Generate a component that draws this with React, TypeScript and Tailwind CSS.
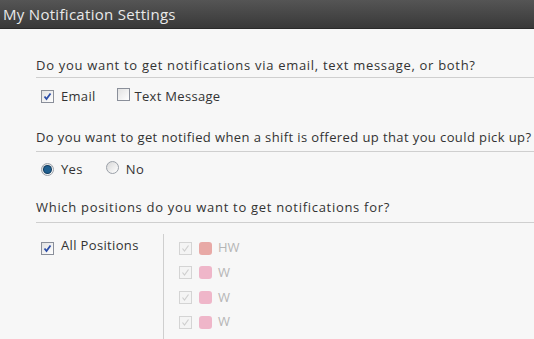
import React from "react";

function Check({ checked, disabled }: { checked: boolean; disabled?: boolean }) {
  return (
    <span
      className={
        "inline-flex h-[13px] w-[13px] shrink-0 items-center justify-center border " +
        (disabled ? "border-[#d4d4d4] bg-[#f4f4f4]" : "border-[#8a8f9a] bg-gradient-to-br from-[#e2e2e2] to-white")
      }
    >
      {checked && (
        <svg width="9" height="9" viewBox="0 0 9 9">
          <path
            d="M1.5 4.5 L3.5 7 L7.5 1.5"
            fill="none"
            stroke={disabled ? "#cfcfcf" : "#2d4ea8"}
            strokeWidth={disabled ? 1.2 : 1.8}
          />
        </svg>
      )}
    </span>
  );
}

function Radio({ checked }: { checked: boolean }) {
  return (
    <span className="inline-flex h-[13px] w-[13px] shrink-0 items-center justify-center rounded-full border border-[#9aa0a8] bg-gradient-to-br from-[#d8d8d8] to-white">
      {checked && <span className="h-[7px] w-[7px] rounded-full bg-[#1f5f8f] ring-1 ring-[#0d3a5e]" />}
    </span>
  );
}

export default function App() {
  const font = { fontFamily: '"Open Sans", "DejaVu Sans", sans-serif' };
  return (
    <div className="h-[339px] w-[534px] overflow-hidden bg-[#f7f7f7] text-[#333]" style={font}>
      <div className="flex h-[29px] items-center border-b border-[#2a2a2a] bg-gradient-to-b from-[#555] to-[#393939] pl-[3px] text-[15px] tracking-[0.3px] text-[#e9e9e9]">
        My Notification Settings
      </div>
      <div className="whitespace-nowrap pl-[36px] pt-[27px] text-[13px]">
        <div className="border-b border-[#cfcfcf] pb-[3px] leading-[18px] tracking-[0.7px]">
          Do you want to get notifications via email, text message, or both?
        </div>
        <div className="mt-[9px] flex items-center pl-[5px] leading-[18px] tracking-[0.3px]">
          <Check checked />
          <span className="ml-[7px]">Email</span>
          <span className="ml-[21px]"><Check checked={false} /></span>
          <span className="ml-[5px]">Text Message</span>
        </div>
        <div className="mt-[23px] border-b border-[#cfcfcf] pb-[5px] leading-[18px] tracking-[0.4px]">
          Do you want to get notified when a shift is offered up that you could pick up?
        </div>
        <div className="mt-[8px] flex items-center pl-[5px] leading-[18px] tracking-[0.35px]">
          <Radio checked />
          <span className="ml-[7px]">Yes</span>
          <span className="ml-[23px]"><Radio checked={false} /></span>
          <span className="ml-[7px]">No</span>
        </div>
        <div className="mt-[20px] border-b border-[#cfcfcf] pb-[6px] leading-[18px] tracking-[0.7px]">
          Which positions do you want to get notifications for?
        </div>
        <div className="mt-[11px] flex">
          <div className="flex w-[127px] items-start pl-[5px] pt-[2px] leading-[18px] tracking-[0.35px]">
            <span className="mt-[3px]"><Check checked /></span>
            <span className="ml-[7px]">All Positions</span>
          </div>
          <div className="flex h-[120px] flex-col gap-[6.7px] border-l border-[#cfcfcf] pl-[15px] pt-[5px] text-[#b5b5b5]">
            {[
              { n: "HW", c: "bg-[#e8a9a6]" },
              { n: "W", c: "bg-[#efb6c9]" },
              { n: "W", c: "bg-[#efb6c9]" },
              { n: "W", c: "bg-[#efb6c9]" },
            ].map((p, i) => (
              <div key={i} className="flex h-[18px] items-center">
                <Check checked disabled />
                <span className={"ml-[7px] h-[13px] w-[13px] rounded-[3px] " + p.c} />
                <span className="ml-[6px]">{p.n}</span>
              </div>
            ))}
          </div>
        </div>
      </div>
    </div>
  );
}
